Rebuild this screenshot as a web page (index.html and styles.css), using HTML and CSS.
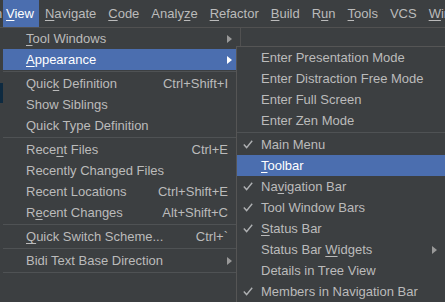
FILE: index.html
```html
<!DOCTYPE html>
<html lang="en">

<head>
    <meta charset="UTF-8">
    <meta name="viewport" content="width=device-width, initial-scale=1.0">
    <title>View menu</title>
    <link rel="stylesheet" href="styles.css">
</head>

<body>
    <!-- Barra de menus -->
    <div class="menubar">
        <span class="mb-prev">n</span>
        <span class="mb-item active"><u>V</u>iew</span>
        <span class="mb-item"><u>N</u>avigate</span>
        <span class="mb-item"><u>C</u>ode</span>
        <span class="mb-item">Analy<u>z</u>e</span>
        <span class="mb-item"><u>R</u>efactor</span>
        <span class="mb-item"><u>B</u>uild</span>
        <span class="mb-item">R<u>u</u>n</span>
        <span class="mb-item"><u>T</u>ools</span>
        <span class="mb-item">VCS</span>
        <span class="mb-item"><u>W</u>indow</span>
    </div>

    <div class="workspace">
        <!-- Fundo da IDE atrás dos menus -->
        <div class="toolbar">
            <div class="tb-space"></div>
            <div class="tb-sep"></div>
        </div>
        <div class="gutter-mark"></div>

        <!-- Menu View -->
        <div class="popup view-menu">
            <div class="item sub"><span class="label"><u>T</u>ool Windows</span><span class="arrow"></span></div>
            <div class="item sub selected"><span class="label"><u>A</u>ppearance</span><span class="arrow"></span></div>
            <div class="sep"></div>
            <div class="item"><span class="label">Quic<u>k</u> Definition</span><span class="key">Ctrl+Shift+I</span></div>
            <div class="item"><span class="label">Show Siblings</span></div>
            <div class="item"><span class="label">Quick Type Definition</span></div>
            <div class="sep"></div>
            <div class="item"><span class="label">Rece<u>n</u>t Files</span><span class="key">Ctrl+E</span></div>
            <div class="item"><span class="label">Recently Changed Files</span></div>
            <div class="item"><span class="label">Recent Locations</span><span class="key">Ctrl+Shift+E</span></div>
            <div class="item"><span class="label">R<u>e</u>cent Changes</span><span class="key">Alt+Shift+C</span></div>
            <div class="sep"></div>
            <div class="item"><span class="label"><u>Q</u>uick Switch Scheme...</span><span class="key">Ctrl+`</span></div>
            <div class="sep"></div>
            <div class="item sub"><span class="label">Bidi Text Base Direction</span><span class="arrow"></span></div>
            <div class="sep"></div>
        </div>

        <!-- Submenu Appearance -->
        <div class="popup appearance-menu">
            <div class="sitem"><span class="mark"></span><span class="label">Enter Presentation Mode</span></div>
            <div class="sitem"><span class="mark"></span><span class="label">Enter Distraction Free Mode</span></div>
            <div class="sitem"><span class="mark"></span><span class="label">Enter Full Screen</span></div>
            <div class="sitem"><span class="mark"></span><span class="label">Enter Zen Mode</span></div>
            <div class="sep"></div>
            <div class="sitem"><span class="mark"><svg width="10" height="9" viewBox="0 0 10 9"><polyline points="0.8,4.6 3.6,7.6 9.2,0.8" /></svg></span><span class="label">Main Menu</span></div>
            <div class="sitem selected"><span class="mark"></span><span class="label"><u>T</u>oolbar</span></div>
            <div class="sitem"><span class="mark"><svg width="10" height="9" viewBox="0 0 10 9"><polyline points="0.8,4.6 3.6,7.6 9.2,0.8" /></svg></span><span class="label">Na<u>v</u>igation Bar</span></div>
            <div class="sitem"><span class="mark"><svg width="10" height="9" viewBox="0 0 10 9"><polyline points="0.8,4.6 3.6,7.6 9.2,0.8" /></svg></span><span class="label">Tool Window Bars</span></div>
            <div class="sitem"><span class="mark"><svg width="10" height="9" viewBox="0 0 10 9"><polyline points="0.8,4.6 3.6,7.6 9.2,0.8" /></svg></span><span class="label"><u>S</u>tatus Bar</span></div>
            <div class="sitem"><span class="mark"></span><span class="label">Status Bar <u>W</u>idgets</span><span class="arrow"></span></div>
            <div class="sitem"><span class="mark"></span><span class="label">Details in Tree View</span></div>
            <div class="sitem"><span class="mark"><svg width="10" height="9" viewBox="0 0 10 9"><polyline points="0.8,4.6 3.6,7.6 9.2,0.8" /></svg></span><span class="label">Members in Navigation Bar</span></div>
        </div>
    </div>
</body>

</html>
```

FILE: styles.css
```css
/* Reset básico */
* {
    margin: 0;
    padding: 0;
    box-sizing: border-box;
}

body {
    background: #3c3f41;
    color: #bbbbbb;
    font-family: "Liberation Sans", Arial, sans-serif;
    font-size: 13px;
    width: 445px;
    height: 302px;
    overflow: hidden;
}

u {
    text-underline-offset: 2px;
}

/* Barra de menus */
.menubar {
    display: flex;
    height: 27px;
    line-height: 27px;
    white-space: nowrap;
    overflow: hidden;
}

.mb-prev {
    margin-left: -5px;
    width: 8px;
    overflow: hidden;
    flex-shrink: 0;
}

.mb-item {
    padding: 0 6px;
    flex-shrink: 0;
}

.mb-item.active {
    background: #4b6eaf;
    color: #ffffff;
    padding: 0 5px 0 3px;
}

/* Área de trabalho */
.workspace {
    position: relative;
    height: 275px;
    border-top: 1px solid #515151;
}

.toolbar {
    display: flex;
    height: 18px;
}

.tb-space {
    width: 240px;
}

.tb-sep {
    width: 1px;
    background: #515151;
}

.gutter-mark {
    width: 3px;
    height: 20px;
    margin-top: 37px;
    background: #0e2a40;
}

/* Menus */
.popup {
    position: absolute;
    top: 0;
    bottom: 0;
    background: #3c3f41;
    white-space: nowrap;
}

.view-menu {
    left: 3px;
    width: 233px;
}

.appearance-menu {
    left: 236px;
    top: 18px;
    width: 215px;
    border-top: 1px solid #555555;
    border-left: 1px solid #555555;
}

.item {
    display: flex;
    align-items: center;
    height: 21px;
    line-height: 21px;
    padding: 0 8px 0 23px;
}

.item.sub {
    padding-right: 4px;
}

.label {
    flex: 1;
}

.key {
    color: #bbbbbb;
}

.selected {
    background: #4b6eaf;
    color: #ffffff;
}

.arrow {
    width: 0;
    height: 0;
    border-left: 5px solid #999999;
    border-top: 4px solid transparent;
    border-bottom: 4px solid transparent;
}

.selected .arrow {
    border-left-color: #ffffff;
}

.sep {
    height: 3px;
    padding-top: 1px;
}

.sep::after {
    content: "";
    display: block;
    height: 1px;
    background: #4f5254;
}

/* Submenu */
.sitem {
    display: flex;
    align-items: center;
    height: 21px;
    line-height: 21px;
    padding: 0 14px 0 6px;
}

.mark {
    width: 18px;
    height: 21px;
    display: flex;
    align-items: center;
}

.mark svg {
    fill: none;
    stroke: #afb1b3;
    stroke-width: 1.4;
}
```
